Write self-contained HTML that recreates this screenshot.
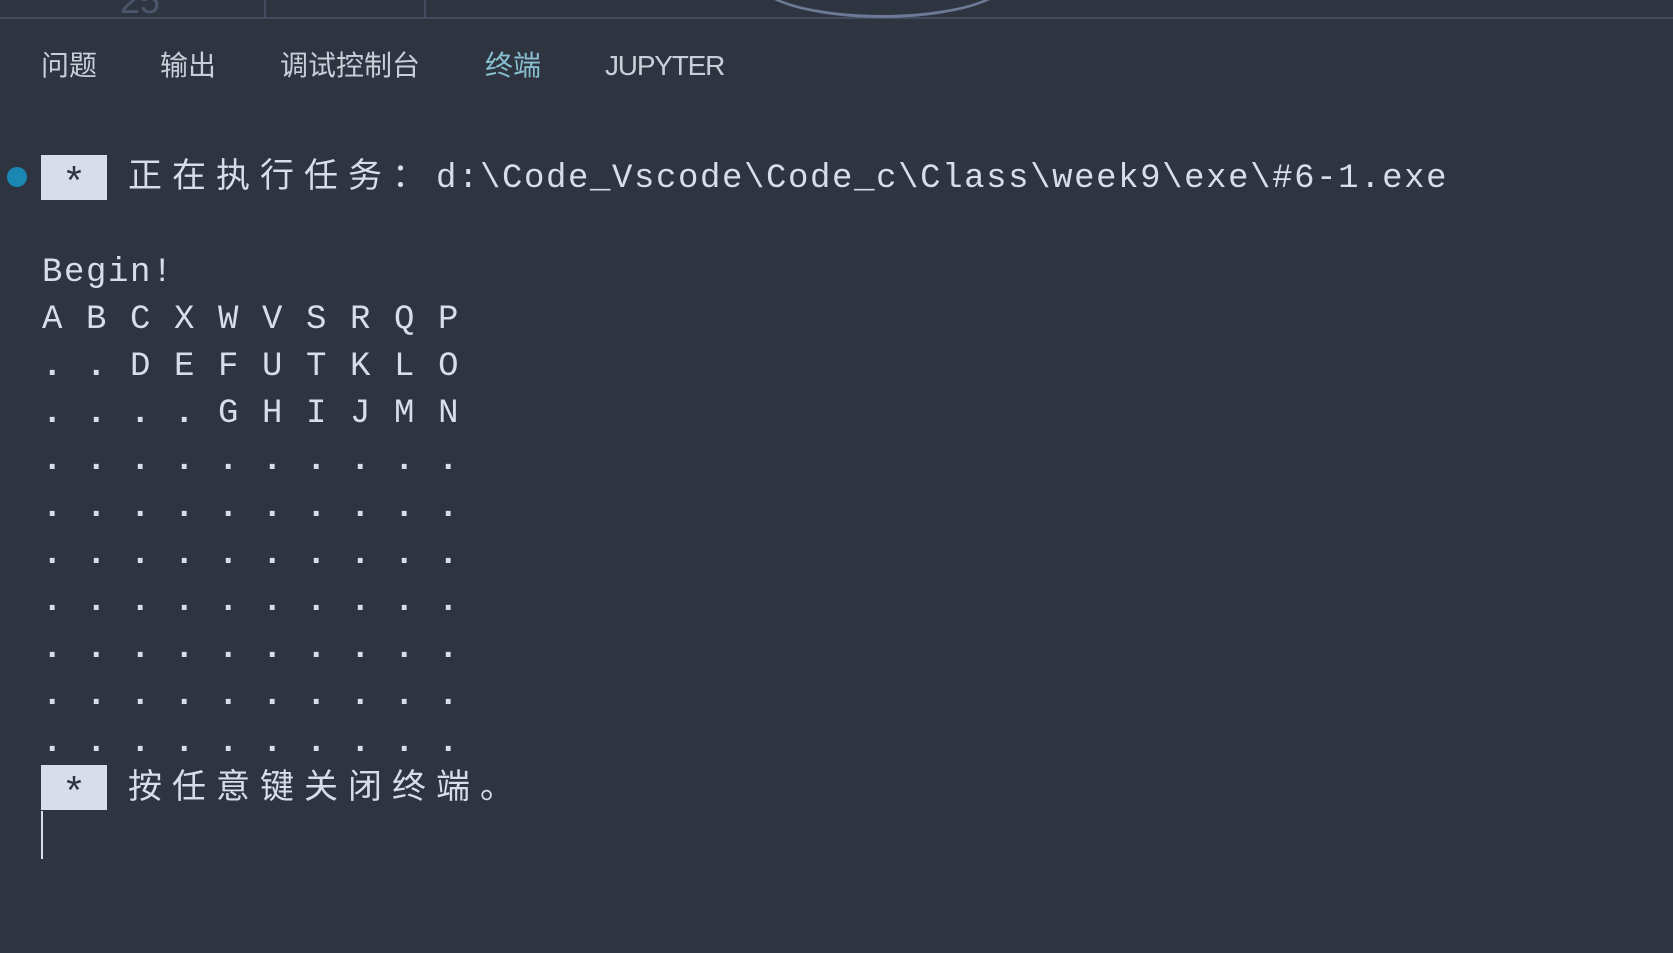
<!DOCTYPE html>
<html><head><meta charset="utf-8"><style>
html,body{margin:0;padding:0;}
body{width:1673px;height:953px;background:#2e3440;position:relative;overflow:hidden;font-family:"Liberation Mono","Noto Sans CJK SC",monospace;color:#d8dee9;}
.abs{position:absolute;}
.tab{position:absolute;top:46px;font-family:"Liberation Sans","Noto Sans CJK SC",sans-serif;font-size:28px;color:#c9ced8;line-height:40px;}
.row{position:absolute;left:42px;font-size:34px;line-height:47px;letter-spacing:1.6px;white-space:pre;}
.d{font-weight:bold;}
.cjk{letter-spacing:10px;}
.box{position:absolute;left:41px;width:66px;height:45px;background:#d8dee9;color:#2e3440;font-size:40px;text-align:center;line-height:62px;}
</style></head><body>
<div class="abs" style="left:0;top:17px;width:1673px;height:2px;background:#434c5e"></div>
<div class="abs" style="left:264px;top:0;width:2px;height:17px;background:#434c5e"></div>
<div class="abs" style="left:424px;top:0;width:2px;height:17px;background:#434c5e"></div>
<div class="abs" style="left:754px;top:-60px;width:256px;height:78px;border:3px solid #6c7a96;border-radius:50%;box-sizing:border-box;"></div>
<div class="abs" style="left:120px;top:-20px;font-size:36px;color:#4c566a;font-family:'Liberation Sans',sans-serif">25</div>

<div class="tab" style="left:41px">问题</div>
<div class="tab" style="left:160px">输出</div>
<div class="tab" style="left:280px">调试控制台</div>
<div class="tab" style="left:485px;color:#88c0d0">终端</div>
<div class="tab" style="left:605px;letter-spacing:-1.2px">JUPYTER</div>

<div class="abs" style="left:7px;top:167px;width:20px;height:20px;border-radius:50%;background:#1b87b3"></div>
<div class="box" style="top:155px">*</div>
<div class="row" style="left:128px;top:156px"><span class="cjk">正在执行任务：</span>d:\Code_Vscode\Code_c\Class\week9\exe\#6-1.exe</div>

<div class="row" style="top:250px">Begin!</div>
<div class="row" style="top:297px">A B C X W V S R Q P</div>
<div class="row" style="top:344px"><span class="d">. .</span> D E F U T K L O</div>
<div class="row" style="top:391px"><span class="d">. . . .</span> G H I J M N</div>
<div class="row d" style="top:438px">. . . . . . . . . .</div>
<div class="row d" style="top:485px">. . . . . . . . . .</div>
<div class="row d" style="top:532px">. . . . . . . . . .</div>
<div class="row d" style="top:579px">. . . . . . . . . .</div>
<div class="row d" style="top:626px">. . . . . . . . . .</div>
<div class="row d" style="top:673px">. . . . . . . . . .</div>
<div class="row d" style="top:720px">. . . . . . . . . .</div>

<div class="box" style="top:765px">*</div>
<div class="row" style="left:128px;top:767px"><span class="cjk">按任意键关闭终端。</span></div>
<div class="abs" style="left:41px;top:811px;width:2px;height:48px;background:#d8dee9"></div>
</body></html>
